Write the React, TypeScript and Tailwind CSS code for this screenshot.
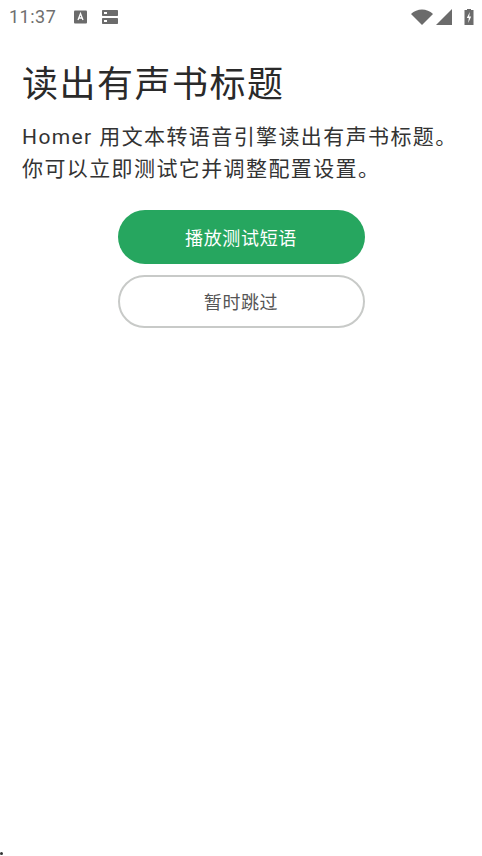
export default function App() {
  const cjk = { fontFamily: 'Roboto, "Noto Sans CJK SC", sans-serif' };
  return (
    <div className="relative w-[482px] h-[856px] bg-white overflow-hidden flex flex-col" style={cjk}>
      <div className="h-[34px] flex items-center justify-between pl-[9px] pr-[8px] shrink-0">
        <div className="flex items-center">
          <span className="text-[18px] text-[#6f6f6f] tracking-[0.5px] leading-none w-[55px]">11:37</span>
          <svg width="16" height="14" viewBox="0 0 16 14" className="ml-[9px] mr-[12px]">
            <rect x="1" y="0.5" width="13" height="13" rx="1" fill="#6b6b6b" />
            <path d="M5 10 L7.5 3.5 L10 10 M5.8 8 H9.2" stroke="#fff" strokeWidth="1.3" fill="none" />
          </svg>
          <svg width="18" height="16" viewBox="0 0 18 16">
            <rect x="1" y="1" width="16" height="6" rx="0.7" fill="#6b6b6b" />
            <rect x="1" y="9" width="16" height="6" rx="0.7" fill="#6b6b6b" />
            <rect x="3" y="3" width="3" height="2" fill="#fff" />
            <rect x="3" y="11" width="3" height="2" fill="#fff" />
          </svg>
        </div>
        <div className="flex items-center">
          <svg width="24" height="18" viewBox="0 0 24 18" className="mr-[1px]">
            <path d="M1 6 C7 0 17 0 23 6 L12 17 Z" fill="#6b6b6b" />
          </svg>
          <svg width="18" height="18" viewBox="0 0 18 18" className="mr-[11px]">
            <path d="M1 17 L17 1 V17 Z" fill="#6b6b6b" />
          </svg>
          <svg width="10" height="18" viewBox="0 0 10 18">
            <path d="M3 1 H7 V2 H9.5 V17 H0.5 V2 H3 Z" fill="#6b6b6b" />
            <path d="M5.8 4 L2.8 10 H4.8 L4.2 15 L7.2 8.5 H5.2 Z" fill="#fff" />
          </svg>
        </div>
      </div>
      <div className="px-[22px] pt-[27px]">
        <h1 className="text-[36px] leading-[48px] tracking-[1.5px] font-normal text-[#2a2a2a] whitespace-nowrap">读出有声书标题</h1>
        <p className="mt-[12px] text-[21px] leading-[32px] tracking-[1.4px] text-[#333333] whitespace-nowrap">
          Homer 用文本转语音引擎读出有声书标题。
          <br />
          你可以立即测试它并调整配置设置。
        </p>
      </div>
      <div className="mt-[25px] flex flex-col items-center gap-[11px]">
        <button className="w-[247px] h-[54px] pt-[2px] rounded-full bg-[#26a65f] text-white text-[18px] tracking-[0.65px]">播放测试短语</button>
        <button className="w-[247px] h-[53px] pt-[1px] rounded-full bg-white border-2 border-[#c8cac8] text-[#555555] text-[18px] tracking-[0.6px]">暂时跳过</button>
      </div>
      <div className="absolute left-0 bottom-[1px] w-[3px] h-[3px] bg-[#333333] rounded-full" />
    </div>
  );
}
